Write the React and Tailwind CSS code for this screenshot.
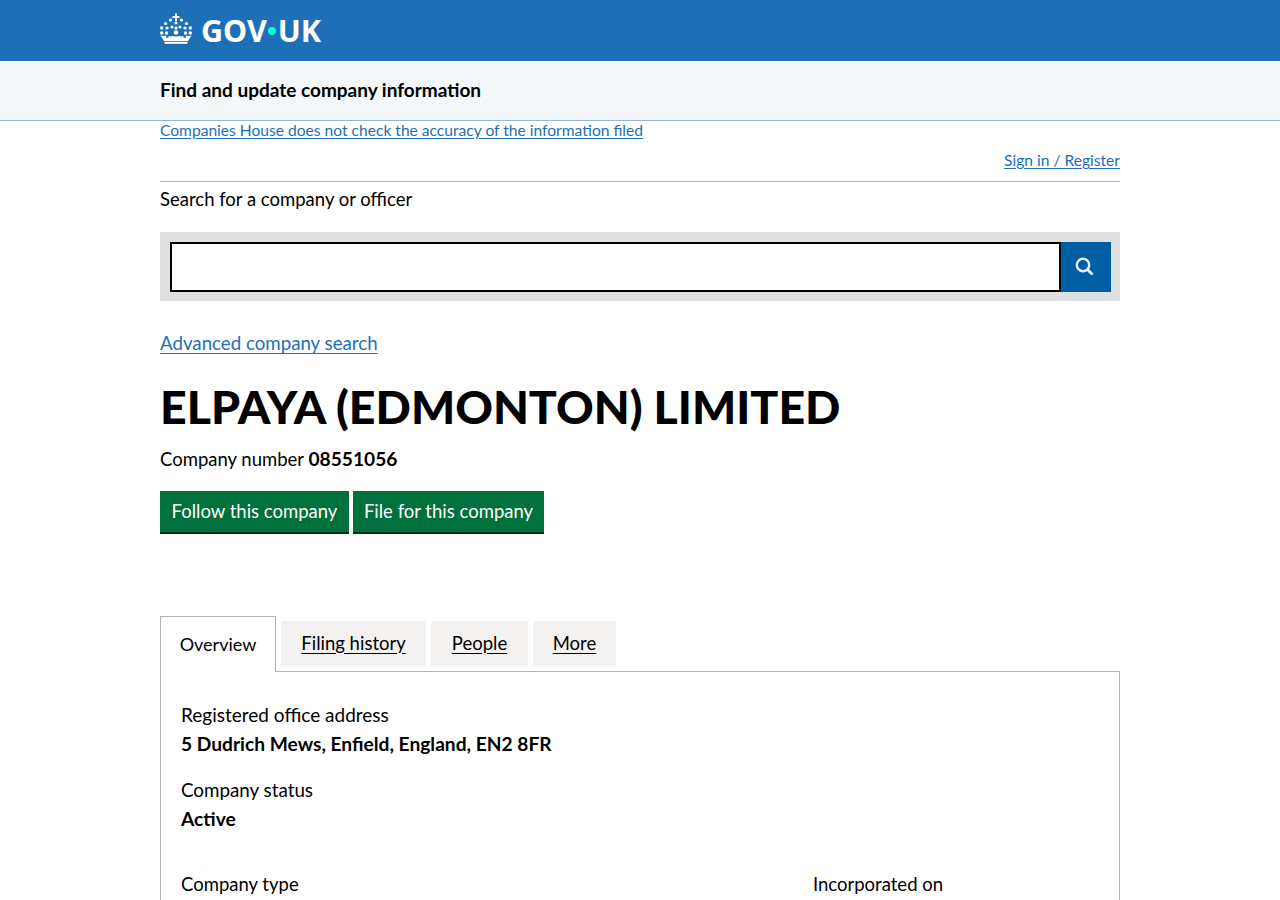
const Crown = () => (
  <svg width="32" height="31" viewBox="0 0 32 31" fill="#fff" className="-mt-[5px]" aria-hidden="true">
    <path d="M15 0.500h2v2.500h2.500v2H17v3h-2V5h-2.500V3H15z" />
    <circle cx="16" cy="10" r="1.600" />
    <circle cx="10.500" cy="7" r="1.600" />
    <circle cx="21.500" cy="7" r="1.600" />
    <circle cx="5.500" cy="10.500" r="1.600" />
    <circle cx="26.500" cy="10.500" r="1.600" />
    <circle cx="1.700" cy="15" r="1.700" />
    <circle cx="30.300" cy="15" r="1.700" />
    <circle cx="1.700" cy="20" r="1.700" />
    <circle cx="30.300" cy="20" r="1.700" />
    <circle cx="7" cy="15" r="1.600" />
    <circle cx="25" cy="15" r="1.600" />
    <circle cx="12" cy="14" r="1.600" />
    <circle cx="20" cy="14" r="1.600" />
    <circle cx="16" cy="15" r="1.600" />
    <circle cx="6.500" cy="20" r="1.700" />
    <circle cx="25.500" cy="20" r="1.700" />
    <circle cx="16" cy="19.500" r="2.200" />
    <path d="M0.500 22.500c2 .6 3.600 .6 5 0 .8 .9 1 1.800 .7 2.600 1.400 0 2.400-.9 3-2.400 1.300 .9 2.600 .9 3.600 0 .9 .6 2 .9 3.200 .9s2.300-.3 3.200-.9c1 .9 2.300 .9 3.600 0 .6 1.500 1.600 2.400 3 2.400-.3-.8-.1-1.700 .7-2.600 1.400 .6 3 .6 5 0L28 28H4z" />
    <path d="M4.500 28.800h23v2h-23z" />
  </svg>
)

const TabLink = ({ width, children }) => (
  <a className={`flex h-[45px] items-center justify-center bg-[#f3f2f1] text-[18.500px] text-black underline underline-offset-[3px] ${width}`}>
    {children}
  </a>
)

const GreenButton = ({ width, children }) => (
  <a className={`flex h-[43px] items-center justify-center border-b-2 border-[#002d18] bg-[#00703c] text-[18.500px] text-white ${width}`}>
    {children}
  </a>
)

export default function App() {
  return (
    <div className="h-[900px] overflow-hidden bg-white font-['Lato',sans-serif] text-black">
      <header className="h-[61px] bg-[#1d70b8]">
        <div className="mx-auto flex h-full w-[960px] items-center gap-[9px]">
          <Crown />
          <span className="flex items-center font-['Noto_Sans',sans-serif] text-[30.500px] leading-none font-bold text-white">
            GOV<span className="mx-[1.500px] inline-block h-[8px] w-[8px] rounded-full bg-[#00ffe0]"></span>UK
          </span>
        </div>
      </header>

      <div className="h-[60px] border-b border-[#8eb8dc] bg-[#f4f8fb]">
        <div className="mx-auto flex h-full w-[960px] items-center text-[19px] font-bold">
          Find and update company information
        </div>
      </div>

      <main className="mx-auto w-[960px]">
        <div className="h-[20px] text-[15.600px] leading-[19px]">
          <a className="text-[#1d70b8] underline underline-offset-2">
            Companies House does not check the accuracy of the information filed
          </a>
        </div>
        <div className="flex h-[41px] items-start justify-end border-b border-[#b1b4b6] pt-[10px] text-[15.600px] leading-[19px]">
          <a className="text-[#1d70b8] underline underline-offset-2">Sign in / Register</a>
        </div>

        <p className="mt-[5px] text-[18.500px] leading-[25px]">Search for a company or officer</p>

        <div className="mt-[20px] flex h-[69px] items-center bg-[#dee0e2] pr-[9px] pl-[10px]">
          <div className="h-[50px] flex-1 border-2 border-black bg-white"></div>
          <button className="flex h-[50px] w-[50px] items-center justify-center bg-[#005ea5] pr-[3px]">
            <svg width="19" height="19" viewBox="0 0 19 19" fill="none" stroke="#e3f0fa" aria-hidden="true">
              <circle cx="8" cy="8" r="6.200" strokeWidth="2.400" />
              <path d="M12.500 12.500 17.500 17.500" strokeWidth="2.800" />
            </svg>
          </button>
        </div>

        <a className="mt-[30px] block text-[18.700px] leading-[25px] text-[#1d70b8] underline underline-offset-[3px]">
          Advanced company search
        </a>

        <h1 className="mt-[20px] text-[46.500px] leading-[60px] font-black">ELPAYA (EDMONTON) LIMITED</h1>

        <p className="mt-[10px] text-[18.500px] leading-[25px]">
          Company number <strong className="text-[19.200px] font-bold">08551056</strong>
        </p>

        <div className="mt-[19px] flex gap-[4px]">
          <GreenButton width="w-[189px]">Follow this company</GreenButton>
          <GreenButton width="w-[191px]">File for this company</GreenButton>
        </div>

        <div className="mt-[82px] flex items-end gap-[5px]">
          <div className="relative z-10 -mb-px flex h-[56px] w-[116px] items-center justify-center border border-b-0 border-[#b1b4b6] bg-white text-[18px]">
            Overview
          </div>
          <div className="mb-[5px] flex gap-[5px]">
            <TabLink width="w-[145px]">Filing history</TabLink>
            <TabLink width="w-[97px]">People</TabLink>
            <TabLink width="w-[83px]">More</TabLink>
          </div>
        </div>

        <section className="border border-[#b1b4b6] px-[20px] pt-[30px] pb-[40px] text-[18.500px] leading-[25px]">
          <p className="text-[19px]">Registered office address</p>
          <p className="mt-[4px] text-[19.200px] font-bold">5 Dudrich Mews, Enfield, England, EN2 8FR</p>
          <p className="mt-[21px] text-[18.800px]">Company status</p>
          <p className="mt-[4px] text-[19.200px] font-bold">Active</p>
          <div className="mt-[41px] grid grid-cols-[632px_1fr]">
            <p>Company type</p>
            <p>Incorporated on</p>
          </div>
        </section>
      </main>
    </div>
  )
}
